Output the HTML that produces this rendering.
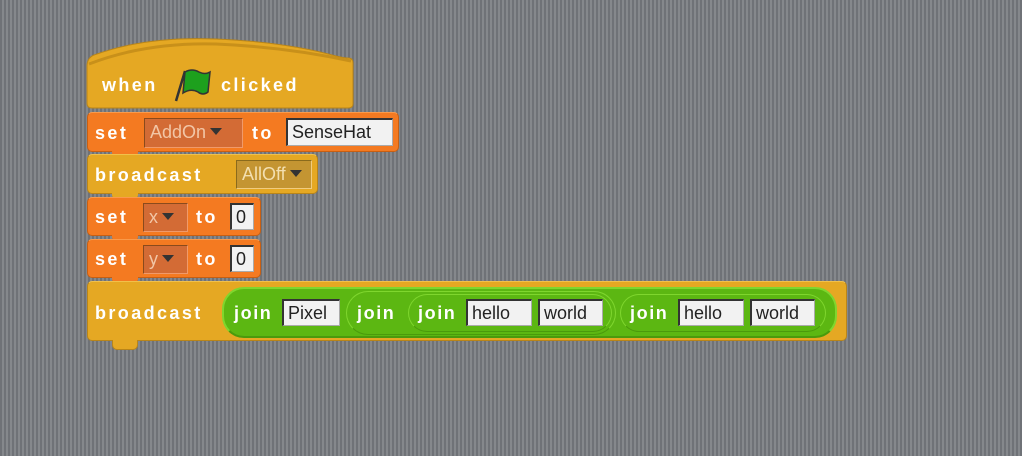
<!DOCTYPE html><html><head><style>
body{margin:0;width:1022px;height:456px;overflow:hidden;background:repeating-linear-gradient(90deg,#6f7277 0 2px,#85888c 2px 4px);font-family:"Liberation Sans",sans-serif;position:relative}
.a{position:absolute;box-sizing:border-box}
.t{position:absolute;color:#fff;font-weight:bold;font-size:18px;line-height:20px;letter-spacing:2.4px}
.y{background:#e5a823;border:1px solid #b98519;border-top-color:#f1c04a;border-radius:5px}
.o{background:#f47a21;border:1px solid #c85f12;border-top-color:#fa9a4a;border-radius:5px}
.dd{position:absolute;box-sizing:border-box;border:1px solid #8a4a1c;border-right-color:#f09a6a;border-bottom-color:#f09a6a;color:#f2c6a6;font-size:18px;line-height:26px;padding-left:5px}
.in{position:absolute;box-sizing:border-box;background:#f2f2f2;border:2px solid #333;border-right-color:#aaa;border-bottom-color:#aaa;color:#222;font-size:18px;line-height:24px;padding-left:4px;border-width:2px 1px 1px 2px}
.ar{display:inline-block;width:0;height:0;border-left:6px solid transparent;border-right:6px solid transparent;border-top:7px solid #333;margin-left:4px;vertical-align:3px}
.g{position:absolute;box-sizing:border-box;background:#5cb712;border:2px solid #7fd62e;border-bottom-color:#4a9a0c;border-radius:22px}
</style></head><body>
<!-- hat -->
<svg class="a" style="left:86px;top:36px" width="270" height="74"><path d="M1 30 Q1 22 8 19 Q60 0 130 3 Q200 6 250 20 Q258 22 262 22 Q267 22 267 27 L267 68 Q267 72 262 72 L6 72 Q1 72 1 67 Z" fill="#e5a823" stroke="#b98519"/><path d="M3 28 Q60 6 130 8 Q200 11 265 25" fill="none" stroke="#c8901a" stroke-width="3"/></svg>
<div class="t" style="left:102px;top:75px">when</div>
<svg class="a" style="left:172px;top:67px" width="42" height="38"><path d="M4 34 L13 4" stroke="#333" stroke-width="2.5"/><path d="M13 5 Q20 1 27 5 Q33 8 38 5 L36 25 Q31 29 26 25 Q19 21 11 26 Z" fill="#1da01d" stroke="#333" stroke-width="1.5"/></svg>
<div class="t" style="left:221px;top:75px">clicked</div>
<!-- set AddOn -->
<div class="a o" style="left:87px;top:112px;width:312px;height:40px"></div>
<div class="a" style="left:112px;top:151px;width:26px;height:6px;background:#f47a21;border-radius:0 0 4px 4px"></div>
<div class="t" style="left:95px;top:123px">set</div>
<div class="dd" style="left:144px;top:118px;width:99px;height:30px;background:#d36b35">AddOn<span class="ar"></span></div>
<div class="t" style="left:252px;top:123px">to</div>
<div class="in" style="left:286px;top:118px;width:107px;height:28px">SenseHat</div>
<!-- broadcast AllOff -->
<div class="a y" style="left:87px;top:154px;width:231px;height:40px"></div>
<div class="a" style="left:112px;top:193px;width:26px;height:6px;background:#e5a823;border-radius:0 0 4px 4px"></div>
<div class="t" style="left:95px;top:165px">broadcast</div>
<div class="dd" style="left:236px;top:160px;width:76px;height:29px;background:#c49532;border-color:#8a6a1c #f0cc80 #f0cc80 #8a6a1c;color:#f3dfb0">AllOff<span class="ar"></span></div>
<!-- set x -->
<div class="a o" style="left:87px;top:197px;width:174px;height:39px"></div>
<div class="a" style="left:112px;top:235px;width:26px;height:6px;background:#f47a21;border-radius:0 0 4px 4px"></div>
<div class="t" style="left:95px;top:207px">set</div>
<div class="dd" style="left:143px;top:203px;width:45px;height:29px;background:#d36b35">x<span class="ar"></span></div>
<div class="t" style="left:196px;top:207px">to</div>
<div class="in" style="left:230px;top:203px;width:24px;height:27px">0</div>
<!-- set y -->
<div class="a o" style="left:87px;top:239px;width:174px;height:39px"></div>
<div class="a" style="left:112px;top:277px;width:26px;height:6px;background:#f47a21;border-radius:0 0 4px 4px"></div>
<div class="t" style="left:95px;top:249px">set</div>
<div class="dd" style="left:143px;top:245px;width:45px;height:29px;background:#d36b35">y<span class="ar"></span></div>
<div class="t" style="left:196px;top:249px">to</div>
<div class="in" style="left:230px;top:245px;width:24px;height:27px">0</div>
<!-- broadcast join -->
<div class="a y" style="left:87px;top:281px;width:760px;height:60px"></div>
<div class="a" style="left:112px;top:340px;width:26px;height:10px;background:#e5a823;border:1px solid #b98519;border-top:none;border-radius:0 0 5px 5px"></div>
<div class="t" style="left:95px;top:303px">broadcast</div>
<div class="g" style="left:222px;top:287px;width:615px;height:51px"></div>
<div class="t" style="left:234px;top:303px;letter-spacing:1.6px">join</div>
<div class="in" style="left:282px;top:299px;width:58px;height:27px">Pixel</div>
<div class="g" style="left:346px;top:291px;width:270px;height:44px;border-width:1px"></div>
<div class="t" style="left:357px;top:303px;letter-spacing:1.6px">join</div>
<div class="g" style="left:408px;top:294px;width:204px;height:38px;border-width:1px"></div>
<div class="t" style="left:418px;top:303px;letter-spacing:1.6px">join</div>
<div class="in" style="left:466px;top:299px;width:66px;height:27px">hello</div>
<div class="in" style="left:538px;top:299px;width:65px;height:27px">world</div>
<div class="g" style="left:620px;top:294px;width:206px;height:38px;border-width:1px"></div>
<div class="t" style="left:630px;top:303px;letter-spacing:1.6px">join</div>
<div class="in" style="left:678px;top:299px;width:66px;height:27px">hello</div>
<div class="in" style="left:750px;top:299px;width:65px;height:27px">world</div>
</body></html>
